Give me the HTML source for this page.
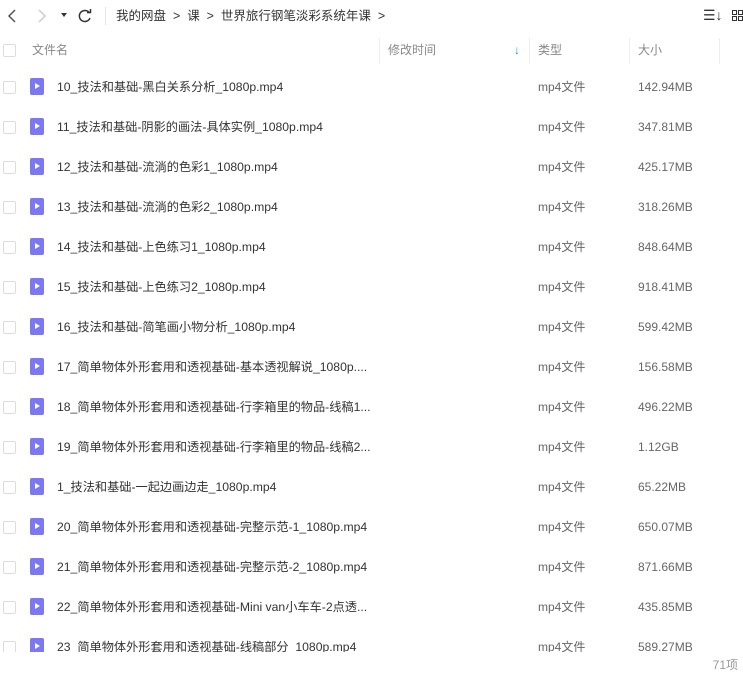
<!DOCTYPE html>
<html><head><meta charset="utf-8"><style>
body{margin:0;width:743px;height:676px;overflow:hidden;background:#fff;font-family:"Liberation Sans","Noto Sans CJK SC",sans-serif;font-size:12px;color:#454d5a;position:relative}
.tb{position:absolute;left:0;top:0;width:743px;height:32px}
.t{position:absolute;white-space:nowrap;line-height:16px}
.hdr{position:absolute;top:36px;left:0;width:743px;height:30px;color:#888}
.vl{position:absolute;top:38px;width:1px;height:26px;background:#eee}
.row{position:absolute;left:0;width:743px;height:40px}
.cb{position:absolute;left:3px;width:11px;height:11px;border:1px solid #ddd;border-radius:2px}
.ic{position:absolute;left:30px;width:14px;height:17px;background:#7b78f2;border-radius:2px}
.ic:after{content:"";position:absolute;left:5px;top:5px;border-left:5px solid #fff;border-top:3.5px solid transparent;border-bottom:3.5px solid transparent}
.clip{position:absolute;left:0;top:66px;width:743px;height:586px;overflow:hidden}
</style></head><body>
<div class="tb">
<svg class="t" style="left:6px;top:8px" width="12" height="16"><path d="M9 2 L3 8 L9 14" stroke="#555" stroke-width="1.5" fill="none"/></svg>
<svg class="t" style="left:36px;top:8px" width="12" height="16"><path d="M3 2 L9 8 L3 14" stroke="#ccc" stroke-width="1.5" fill="none"/></svg>
<svg class="t" style="left:61px;top:13px" width="6" height="5"><path d="M0 0 L6 0 L3 4z" fill="#333"/></svg>
<svg class="t" style="left:77px;top:8px" width="16" height="16"><path d="M12.5 5 A5.5 5.5 0 1 0 13 10" stroke="#333" stroke-width="1.5" fill="none"/><path d="M10 4.5 L13.5 4.5 L13.5 1" stroke="#333" stroke-width="1.5" fill="none"/></svg>
<div class="t" style="left:105px;top:7px;width:1px;height:18px;background:#e5e5e5"></div>
<div class="t" style="left:116px;top:8px;color:#333;font-size:12.5px">我的网盘&nbsp;&nbsp;&gt;&nbsp;&nbsp;课&nbsp;&nbsp;&gt;&nbsp;&nbsp;世界旅行钢笔淡彩系统年课&nbsp;&nbsp;&gt;</div>
<div class="t" style="left:703px;top:7px;color:#333;font-size:14px">☰↓</div>
<svg class="t" style="left:732px;top:10px" width="11" height="12"><rect x="0.5" y="0.5" width="4" height="4" fill="none" stroke="#333"/><rect x="0.5" y="6.5" width="4" height="4" fill="none" stroke="#333"/><rect x="6.5" y="0.5" width="4" height="4" fill="none" stroke="#333"/><rect x="6.5" y="6.5" width="4" height="4" fill="none" stroke="#333"/></svg>
</div>
<div class="hdr">
<div class="cb" style="top:8px"></div>
<div class="t" style="left:32px;top:6px">文件名</div>
<div class="t" style="left:388px;top:6px">修改时间</div>
<div class="t" style="left:514px;top:6px;color:#2a8fe0">↓</div>
<div class="t" style="left:538px;top:6px">类型</div>
<div class="t" style="left:638px;top:6px">大小</div>
</div>
<div class="vl" style="left:379px"></div><div class="vl" style="left:529px"></div><div class="vl" style="left:629px"></div><div class="vl" style="left:719px"></div>
<div class="clip" id="c"></div>
<div class="t" style="right:5px;top:657px;color:#999">71项</div>
<script>
var d=[["10_技法和基础-黑白关系分析_1080p.mp4","142.94MB"],["11_技法和基础-阴影的画法-具体实例_1080p.mp4","347.81MB"],["12_技法和基础-流淌的色彩1_1080p.mp4","425.17MB"],["13_技法和基础-流淌的色彩2_1080p.mp4","318.26MB"],["14_技法和基础-上色练习1_1080p.mp4","848.64MB"],["15_技法和基础-上色练习2_1080p.mp4","918.41MB"],["16_技法和基础-简笔画小物分析_1080p.mp4","599.42MB"],["17_简单物体外形套用和透视基础-基本透视解说_1080p....","156.58MB"],["18_简单物体外形套用和透视基础-行李箱里的物品-线稿1...","496.22MB"],["19_简单物体外形套用和透视基础-行李箱里的物品-线稿2...","1.12GB"],["1_技法和基础-一起边画边走_1080p.mp4","65.22MB"],["20_简单物体外形套用和透视基础-完整示范-1_1080p.mp4","650.07MB"],["21_简单物体外形套用和透视基础-完整示范-2_1080p.mp4","871.66MB"],["22_简单物体外形套用和透视基础-Mini van小车车-2点透...","435.85MB"],["23_简单物体外形套用和透视基础-线稿部分_1080p.mp4","589.27MB"]];
var h="";d.forEach(function(r,i){var y=i*40;h+='<div class="row" style="top:'+y+'px"><div class="cb" style="top:15px"></div><div class="ic" style="top:12px"></div><div class="t" style="left:57px;top:13px;color:#333;font-size:12.2px">'+r[0]+'</div><div class="t" style="left:538px;top:13px;color:#666">mp4文件</div><div class="t" style="left:638px;top:13px;color:#666">'+r[1]+'</div></div>';});
document.getElementById("c").innerHTML=h;
</script>
</body></html>
